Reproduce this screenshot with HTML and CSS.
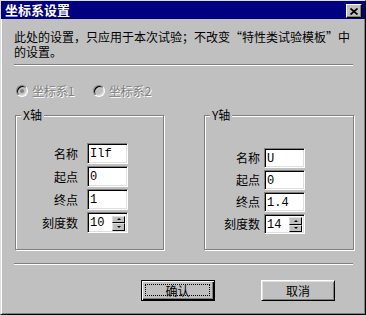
FILE: index.html
```html
<!DOCTYPE html>
<html lang="zh-CN">
<head>
<meta charset="UTF-8" />
<meta name="viewport" content="width=device-width, initial-scale=1" />
<title>坐标系设置</title>
<link rel="stylesheet" href="styles.css">
</head>
<body>
<div class="dialog">
  <div class="titlebar">
    <span class="title">坐标系设置</span>
    <button class="close" aria-label="关闭">
      <svg width="8" height="7" viewBox="0 0 8 7"><path d="M0.5 0.5 L7.5 6.5 M7.5 0.5 L0.5 6.5" stroke="#000" stroke-width="1.7" fill="none"/></svg>
    </button>
  </div>

  <div class="content">
    <p class="note">此处的设置，只应用于本次试验；不改变<span class="q q-open">“</span>特性类试验模板<span class="q q-close">”</span>中<br>的设置。</p>
    <div class="sep"></div>

    <div class="radios">
      <label class="radio disabled"><span class="dot checked"></span>坐标系1</label>
      <label class="radio disabled"><span class="dot"></span>坐标系2</label>
    </div>

    <div class="groups">
      <div class="group group-x">
        <span class="legend">X轴</span>
        <div class="form">
          <span class="lbl">名称</span><div class="field">Ilf</div>
          <span class="lbl">起点</span><div class="field">0</div>
          <span class="lbl">终点</span><div class="field">1</div>
          <span class="lbl">刻度数</span>
          <div class="field spin">
            <span class="val">10</span>
            <span class="arrows"><span class="up"></span><span class="down"></span></span>
          </div>
        </div>
      </div>
      <div class="group group-y">
        <span class="legend">Y轴</span>
        <div class="form">
          <span class="lbl">名称</span><div class="field">U</div>
          <span class="lbl">起点</span><div class="field">0</div>
          <span class="lbl">终点</span><div class="field">1.4</div>
          <span class="lbl">刻度数</span>
          <div class="field spin">
            <span class="val">14</span>
            <span class="arrows"><span class="up"></span><span class="down"></span></span>
          </div>
        </div>
      </div>
    </div>

    <div class="sep sep-bottom"></div>

    <div class="buttons">
      <button class="btn default"><span class="focus">确认</span></button>
      <button class="btn">取消</button>
    </div>
  </div>
</div>
</body>
</html>
```

FILE: styles.css
```css
body {
  margin: 0;
  background: #c0c0c0;
  font-family: "Noto Sans CJK SC", "Liberation Sans", sans-serif;
  font-size: 12px;
  color: #000;
}
.dialog {
  box-sizing: border-box;
  width: 366px;
  height: 315px;
  background: #c0c0c0;
  border: 1px solid;
  border-color: #dfdfdf #000 #000 #dfdfdf;
  box-shadow: inset 1px 1px 0 #fff, inset -1px -1px 0 #808080;
}
.titlebar {
  height: 18px;
  background: #000080;
  display: flex;
  align-items: center;
  justify-content: space-between;
  padding: 0 3px 0 4px;
}
.title {
  color: #fff;
  font-weight: bold;
  font-size: 13px;
  line-height: 18px;
}
.close {
  box-sizing: border-box;
  width: 16px;
  height: 14px;
  padding: 0;
  margin-top: 2px;
  background: #c0c0c0;
  border: 1px solid;
  border-color: #fff #000 #000 #fff;
  box-shadow: inset -1px -1px 0 #808080;
  display: flex;
  align-items: center;
  justify-content: center;
}
.close svg {
  display: block;
}
.content {
  padding: 10px 12px 0 13px;
}
.note {
  margin: 0;
  line-height: 15px;
  white-space: nowrap;
}
/* full-width quotes, as the CJK font draws them narrow */
.q {
  display: inline-block;
  width: 12px;
}
.q-open {
  text-align: right;
}
.q-close {
  text-align: left;
}
.sep {
  margin-top: 5px;
  height: 1px;
  border-top: 1px solid #808080;
  background: #fff;
}
.radios {
  display: flex;
  gap: 18px;
  margin-top: 18px;
  padding-left: 2px;
  line-height: 14px;
}
.radio {
  display: flex;
  align-items: center;
  gap: 4px;
}
.radio.disabled {
  color: #808080;
  text-shadow: 1px 1px 0 #fff;
}
.dot {
  box-sizing: border-box;
  width: 12px;
  height: 12px;
  border-radius: 50%;
  border: 1px solid;
  border-color: #808080 #fff #fff #808080;
  box-shadow: inset 1px 1px 0 #000, inset -1px -1px 0 #dfdfdf;
  background: #c0c0c0;
  display: flex;
  align-items: center;
  justify-content: center;
}
.dot.checked::after {
  content: "";
  width: 4px;
  height: 4px;
  border-radius: 50%;
  background: #808080;
}
.groups {
  display: grid;
  grid-template-columns: 149px 150px;
  column-gap: 40px;
  margin-top: 17px;
  margin-left: 1px;
}
.group {
  position: relative;
  box-sizing: border-box;
  height: 135px;
  border: 1px solid #808080;
  box-shadow: inset 1px 1px 0 #fff, 1px 1px 0 #fff;
}
.legend {
  position: absolute;
  left: 5px;
  top: -8px;
  padding: 0 2px;
  background: #c0c0c0;
  line-height: 14px;
}
.form {
  display: grid;
  align-items: center;
  justify-items: end;
}
.group-x .form {
  grid-template-columns: 36px 41px;
  grid-auto-rows: 21px;
  column-gap: 9px;
  row-gap: 2px;
  padding: 27px 0 0 26px;
}
.group-y .form {
  grid-template-columns: 36px 41px;
  grid-auto-rows: 20px;
  column-gap: 4px;
  row-gap: 2px;
  padding: 32px 0 0 19px;
}
.lbl {
  white-space: nowrap;
  line-height: 14px;
}
.field {
  box-sizing: border-box;
  width: 41px;
  height: 100%;
  background: #fff;
  border: 1px solid;
  border-color: #808080 #fff #fff #808080;
  box-shadow: inset 1px 1px 0 #000, inset -1px -1px 0 #dfdfdf;
  padding: 1px 2px 0 2px;
  font-family: "Liberation Mono", "DejaVu Sans Mono", monospace;
  font-size: 12px;
  line-height: 16px;
  display: flex;
  align-items: center;
}
.spin {
  justify-content: space-between;
  padding-right: 2px;
}
.arrows {
  display: flex;
  flex-direction: column;
  width: 13px;
  height: 15px;
}
.arrows span {
  flex: 1;
  background: #c0c0c0;
  border: 1px solid;
  border-color: #dfdfdf #000 #000 #dfdfdf;
  display: flex;
  align-items: center;
  justify-content: center;
}
.up::after {
  content: "";
  border-left: 2px solid transparent;
  border-right: 2px solid transparent;
  border-bottom: 2px solid #000;
}
.down::after {
  content: "";
  border-left: 2px solid transparent;
  border-right: 2px solid transparent;
  border-top: 2px solid #000;
}
.sep-bottom {
  margin-top: 13px;
}
.buttons {
  display: flex;
  justify-content: flex-end;
  gap: 46px;
  margin-top: 15px;
  padding-right: 18px;
}
.btn {
  box-sizing: border-box;
  width: 74px;
  height: 21px;
  padding: 0;
  font-family: "Noto Sans CJK SC", sans-serif;
  font-size: 12px;
  color: #000;
  background: #c0c0c0;
  border: 1px solid;
  border-color: #fff #000 #000 #fff;
  box-shadow: inset 1px 1px 0 #dfdfdf, inset -1px -1px 0 #808080;
}
.btn.default {
  border-color: #000;
  box-shadow: inset 1px 1px 0 #fff, inset -1px -1px 0 #000, inset -2px -2px 0 #808080;
  padding: 3px 4px 4px 3px;
}
.focus {
  display: block;
  height: 100%;
  box-sizing: border-box;
  border: 1px dotted #000;
  line-height: 11px;
}
```
